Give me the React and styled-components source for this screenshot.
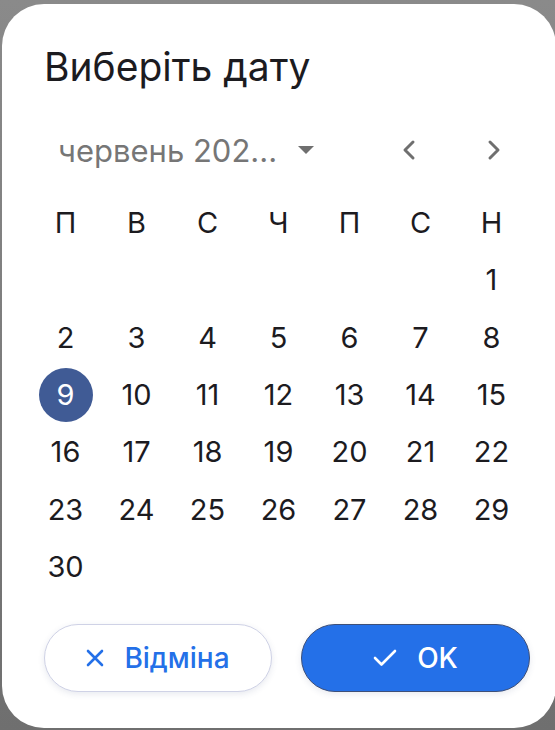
import React from 'react'
import styled, { createGlobalStyle } from 'styled-components'

const GlobalStyle = createGlobalStyle`
  html, body {
    margin: 0;
    padding: 0;
    background: #7a7a7a;
  }
  * {
    box-sizing: border-box;
  }
`

const Backdrop = styled.div`
  width: 555px;
  height: 730px;
  overflow: hidden;
  background: linear-gradient(#8a8a8a, #6f6f6f);
  padding: 4px 2px 2px 2px;
  display: flex;
  font-family: Inter, Roboto, sans-serif;
`

const Dialog = styled.div`
  flex: 1;
  background: #ffffff;
  border-radius: 42px;
  padding: 40px 26px 0 28px;
  display: flex;
  flex-direction: column;
`

const Title = styled.h1`
  margin: 0 0 0 14px;
  font-size: 39px;
  line-height: 46px;
  font-weight: 400;
  color: #1c1b1f;
`

const Header = styled.div`
  margin-top: 36px;
  height: 48px;
  display: flex;
  align-items: center;
`

const MonthButton = styled.button`
  border: none;
  background: none;
  padding: 0 0 0 28px;
  display: flex;
  align-items: center;
  gap: 20px;
  font-family: inherit;
  font-size: 31px;
  color: #767676;
  cursor: pointer;
`

const NavGroup = styled.div`
  margin-left: auto;
  padding-right: 16px;
  display: flex;
  gap: 45px;
`

const NavButton = styled.button`
  border: none;
  background: none;
  width: 40px;
  height: 40px;
  padding: 0;
  display: flex;
  align-items: center;
  justify-content: center;
  color: #6f6f6f;
  cursor: pointer;
`

const Grid = styled.div`
  margin-top: 20px;
  display: grid;
  grid-template-columns: repeat(7, 71px);
  grid-auto-rows: 57.3px;
`

const Cell = styled.div`
  display: flex;
  align-items: center;
  justify-content: center;
  font-size: 29px;
  color: ${p => (p.$selected ? '#ffffff' : '#1c1b1f')};
`

const DayMark = styled.span`
  width: 54px;
  height: 54px;
  border-radius: 50%;
  display: flex;
  align-items: center;
  justify-content: center;
  background: ${p => (p.$selected ? '#405b95' : 'transparent')};
`

const Actions = styled.div`
  margin-top: 29px;
  padding-left: 14px;
  display: flex;
  gap: 29px;
`

const ActionButton = styled.button`
  width: ${p => p.$width}px;
  height: 68px;
  border-radius: 34px;
  display: flex;
  align-items: center;
  justify-content: center;
  gap: 20px;
  font-family: inherit;
  font-size: 28px;
  font-weight: 500;
  cursor: pointer;
  border: 1px solid ${p => (p.$primary ? '#3d4f78' : '#cfd2e6')};
  background: ${p => (p.$primary ? '#2470e8' : '#ffffff')};
  color: ${p => (p.$primary ? '#ffffff' : '#2470e8')};
  box-shadow: 0 2px 6px rgba(60, 70, 120, 0.12);
`

const weekdays = ['П', 'В', 'С', 'Ч', 'П', 'С', 'Н']

// June 2025 begins on a Sunday, so six blanks before the 1st
const days = [...Array(6).fill(null), ...Array.from({ length: 30 }, (_, i) => i + 1)]

const Caret = () => (
  <svg width="18" height="10" viewBox="0 0 18 10">
    <path d="M1 1h16L9 9z" fill="#6f6f6f" />
  </svg>
)

const Chevron = ({ dir }) => (
  <svg width="14" height="22" viewBox="0 0 14 22" fill="none" stroke="currentColor" strokeWidth="3" strokeLinecap="round" strokeLinejoin="round">
    {dir === 'left' ? <path d="M11 3L3 11l8 8" /> : <path d="M3 3l8 8-8 8" />}
  </svg>
)

const CrossIcon = () => (
  <svg width="18" height="18" viewBox="0 0 18 18" stroke="currentColor" strokeWidth="2.6" strokeLinecap="round">
    <path d="M2 2l14 14M16 2L2 16" />
  </svg>
)

const CheckIcon = () => (
  <svg width="24" height="18" viewBox="0 0 24 18" fill="none" stroke="currentColor" strokeWidth="2.6" strokeLinecap="round" strokeLinejoin="round">
    <path d="M2 9l6.5 6.5L22 2" />
  </svg>
)

export default function App () {
  return (
    <>
      <GlobalStyle />
      <Backdrop>
        <Dialog>
          <Title>Виберіть дату</Title>
          <Header>
            <MonthButton>
              червень 202...
              <Caret />
            </MonthButton>
            <NavGroup>
              <NavButton>
                <Chevron dir="left" />
              </NavButton>
              <NavButton>
                <Chevron dir="right" />
              </NavButton>
            </NavGroup>
          </Header>
          <Grid>
            {weekdays.map((d, i) => (
              <Cell key={'w' + i}>{d}</Cell>
            ))}
            {days.map((d, i) => (
              <Cell key={i} $selected={d === 9}>
                {d && <DayMark $selected={d === 9}>{d}</DayMark>}
              </Cell>
            ))}
          </Grid>
          <Actions>
            <ActionButton $width={228}>
              <CrossIcon />
              Відміна
            </ActionButton>
            <ActionButton $width={229} $primary>
              <CheckIcon />
              OK
            </ActionButton>
          </Actions>
        </Dialog>
      </Backdrop>
    </>
  )
}
